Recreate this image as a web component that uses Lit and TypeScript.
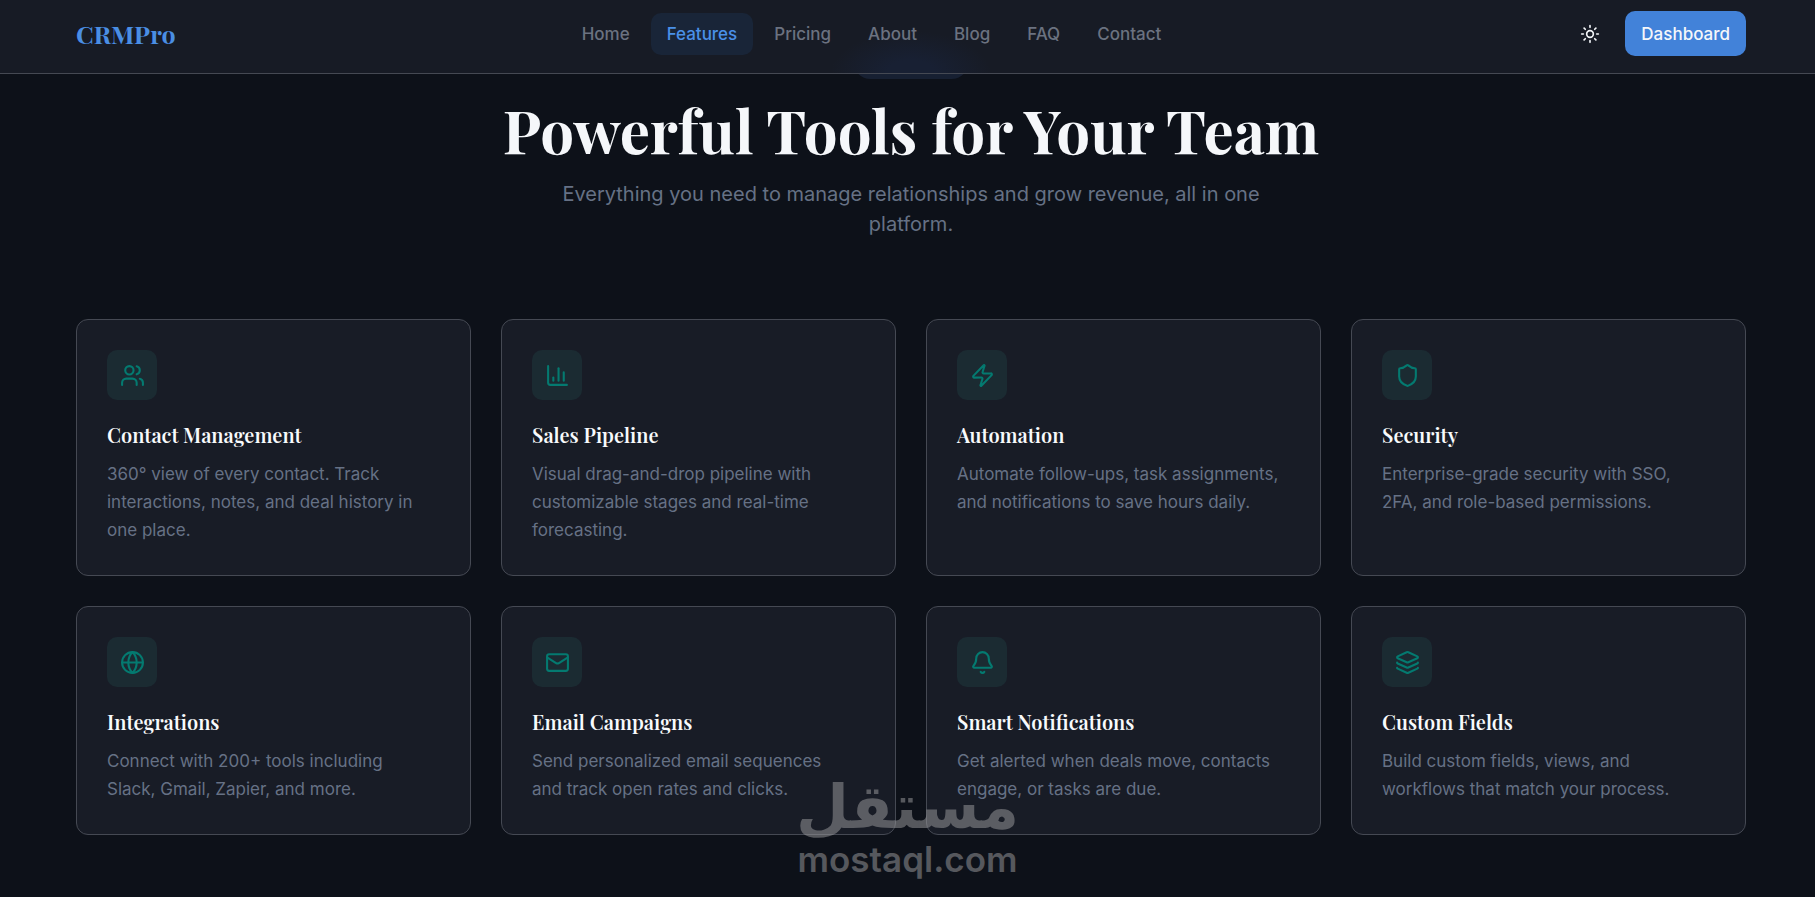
import { LitElement, html, css, svg } from "lit";
import { customElement, property } from "lit/decorators.js";
import { classMap } from "lit/directives/class-map.js";

const icons: Record<string, unknown> = {
  users: svg`<path d="M16 21v-2a4 4 0 0 0-4-4H6a4 4 0 0 0-4 4v2"/><circle cx="9" cy="7" r="4"/><path d="M16 3.128a4 4 0 0 1 0 7.744"/><path d="M22 21v-2a4 4 0 0 0-3-3.87"/>`,
  chart: svg`<path d="M3 3v16a2 2 0 0 0 2 2h16"/><path d="M18 17V9"/><path d="M13 17V5"/><path d="M8 17v-3"/>`,
  zap: svg`<path d="M4 14a1 1 0 0 1-.78-1.63l9.9-10.2a.5.5 0 0 1 .86.46l-1.92 6.02A1 1 0 0 0 13 10h7a1 1 0 0 1 .78 1.63l-9.9 10.2a.5.5 0 0 1-.86-.46l1.92-6.02A1 1 0 0 0 11 14z"/>`,
  shield: svg`<path d="M20 13c0 5-3.5 7.5-7.66 8.95a1 1 0 0 1-.67-.01C7.5 20.5 4 18 4 13V6a1 1 0 0 1 1-1c2 0 4.5-1.2 6.24-2.72a1.17 1.17 0 0 1 1.52 0C14.51 3.81 17 5 19 5a1 1 0 0 1 1 1z"/>`,
  globe: svg`<circle cx="12" cy="12" r="10"/><path d="M12 2a14.5 14.5 0 0 0 0 20 14.5 14.5 0 0 0 0-20"/><path d="M2 12h20"/>`,
  mail: svg`<path d="m22 7-8.991 5.727a2 2 0 0 1-2.009 0L2 7"/><rect x="2" y="4" width="20" height="16" rx="2"/>`,
  bell: svg`<path d="M10.268 21a2 2 0 0 0 3.464 0"/><path d="M3.262 15.326A1 1 0 0 0 4 17h16a1 1 0 0 0 .74-1.673C19.41 13.956 18 12.499 18 8A6 6 0 0 0 6 8c0 4.499-1.411 5.956-2.738 7.326"/>`,
  layers: svg`<path d="M12.83 2.18a2 2 0 0 0-1.66 0L2.6 6.08a1 1 0 0 0 0 1.83l8.58 3.91a2 2 0 0 0 1.66 0l8.58-3.9a1 1 0 0 0 0-1.83z"/><path d="M2 12a1 1 0 0 0 .58.91l8.6 3.91a2 2 0 0 0 1.65 0l8.58-3.9A1 1 0 0 0 22 12"/><path d="M2 17a1 1 0 0 0 .58.91l8.6 3.91a2 2 0 0 0 1.65 0l8.58-3.9A1 1 0 0 0 22 17"/>`,
  sun: svg`<circle cx="12" cy="12" r="4"/><path d="M12 2v2"/><path d="M12 20v2"/><path d="m4.93 4.93 1.41 1.41"/><path d="m17.66 17.66 1.41 1.41"/><path d="M2 12h2"/><path d="M20 12h2"/><path d="m6.34 17.66-1.41 1.41"/><path d="m19.07 4.93-1.41 1.41"/>`,
};

const icon = (name: string) => html`<svg
  class="icon"
  viewBox="0 0 24 24"
  fill="none"
  stroke="currentColor"
  stroke-width="2"
  stroke-linecap="round"
  stroke-linejoin="round"
  aria-hidden="true"
>${icons[name]}</svg>`;

const links = ["Home", "Features", "Pricing", "About", "Blog", "FAQ", "Contact"];

const features = [
  { icon: "users", title: "Contact Management", text: "360° view of every contact. Track interactions, notes, and deal history in one place." },
  { icon: "chart", title: "Sales Pipeline", text: "Visual drag-and-drop pipeline with customizable stages and real-time forecasting." },
  { icon: "zap", title: "Automation", text: "Automate follow-ups, task assignments, and notifications to save hours daily." },
  { icon: "shield", title: "Security", text: "Enterprise-grade security with SSO, 2FA, and role-based permissions." },
  { icon: "globe", title: "Integrations", text: "Connect with 200+ tools including Slack, Gmail, Zapier, and more." },
  { icon: "mail", title: "Email Campaigns", text: "Send personalized email sequences and track open rates and clicks." },
  { icon: "bell", title: "Smart Notifications", text: "Get alerted when deals move, contacts engage, or tasks are due." },
  { icon: "layers", title: "Custom Fields", text: "Build custom fields, views, and workflows that match your process." },
];

@customElement("feature-card")
class FeatureCard extends LitElement {
  @property() icon = "";
  @property() heading = "";
  @property() text = "";

  static styles = css`
    :host {
      display: block;
      box-sizing: border-box;
      padding: 30px 40px 31px 30px;
      border: 1px solid #454953;
      border-radius: 12px;
      background: #181c26;
    }
    .tile {
      display: grid;
      place-items: center;
      width: 50px;
      height: 50px;
      margin-bottom: 20px;
      border-radius: 10px;
      background: #1b2b32;
      color: #047a70;
    }
    .icon {
      width: 25px;
      height: 25px;
    }
    .title {
      margin: 0 0 10px;
      font: 600 20px/30px "Playfair Display", "Liberation Serif", serif;
      color: #f8fafc;
    }
    .text {
      margin: 0;
      font-size: 17px;
      line-height: 28px;
      color: #667185;
    }
  `;

  render() {
    return html`
      <div class="tile">${icon(this.icon)}</div>
      <h3 class="title">${this.heading}</h3>
      <p class="text">${this.text}</p>
    `;
  }
}

@customElement("app-root")
class AppRoot extends LitElement {
  static styles = css`
    :host {
      display: block;
      position: relative;
      min-height: 100vh;
      background: #0d1119;
      font-family: Inter, "Liberation Sans", sans-serif;
      color: #f5f7fa;
    }
    .header {
      position: sticky;
      top: 0;
      z-index: 2;
      padding: 0 69px 0 76px;
      border-bottom: 1px solid #454953;
      background: #171b25;
    }
    .bar {
      display: flex;
      align-items: center;
      justify-content: space-between;
      padding: 11px 0 17px;
      background: radial-gradient(ellipse 80px 42px at 50% 100%, #182033 30%, transparent);
    }
    .logo {
      font: 700 25px/32px "Playfair Display", "Liberation Serif", serif;
      color: #4a8ee4;
      text-decoration: none;
    }
    .nav {
      display: flex;
      gap: 5px;
    }
    .link {
      padding: 8px 16px;
      border-radius: 10px;
      font-size: 17px;
      line-height: 26px;
      font-weight: 500;
      color: #6b7280;
      text-decoration: none;
    }
    .link.active {
      background: #192538;
      color: #4a90e8;
    }
    .actions {
      display: flex;
      align-items: center;
      gap: 13px;
    }
    .theme {
      display: grid;
      place-items: center;
      width: 45px;
      height: 45px;
      padding: 0;
      border: 0;
      background: none;
      color: #f5f7fa;
    }
    .theme .icon {
      width: 20px;
      height: 20px;
    }
    .cta {
      height: 45px;
      padding: 0 16px;
      border: 0;
      border-radius: 10px;
      background: #4282d9;
      color: #f5f7fa;
      font: 500 17px/26px Inter, "Liberation Sans", sans-serif;
    }
    .main {
      padding: 0 69px 60px 76px;
    }
    .hero {
      display: flex;
      flex-direction: column;
      align-items: center;
      margin-bottom: 80px;
      text-align: center;
    }
    .badge {
      width: 116px;
      height: 35px;
      margin-top: -30px;
      border-radius: 18px;
      background: #172032;
    }
    .headline {
      margin: 13px 0 12px;
      font: 700 60px/75px "Playfair Display", "Liberation Serif", serif;
    }
    .lead {
      max-width: 720px;
      margin: 0;
      font-size: 20px;
      line-height: 30px;
      color: #667185;
    }
    .grid {
      display: grid;
      grid-template-columns: repeat(4, 1fr);
      gap: 30px;
    }
    .watermark {
      position: absolute;
      right: 0;
      bottom: 16px;
      left: 0;
      z-index: 3;
      display: flex;
      flex-direction: column;
      align-items: center;
      color: #9e9ea0;
      opacity: 0.5;
      pointer-events: none;
    }
    .mark-ar {
      font: 700 61px/60px "DejaVu Sans", sans-serif;
    }
    .mark-en {
      font-size: 35px;
      line-height: 44px;
      font-weight: 600;
    }
    @media (max-width: 1280px) {
      .grid {
        grid-template-columns: repeat(2, 1fr);
      }
    }
  `;

  render() {
    return html`
      <header class="header">
        <div class="bar">
          <a class="logo" href="#">CRMPro</a>
          <nav class="nav" aria-label="Main">
            ${links.map(
              (name) => html`<a class=${classMap({ link: true, active: name === "Features" })} href="#">${name}</a>`
            )}
          </nav>
          <div class="actions">
            <button class="theme" type="button" aria-label="Toggle theme">${icon("sun")}</button>
            <button class="cta" type="button">Dashboard</button>
          </div>
        </div>
      </header>
      <main class="main">
        <section class="hero">
          <span class="badge"></span>
          <h1 class="headline">Powerful Tools for Your Team</h1>
          <p class="lead">Everything you need to manage relationships and grow revenue, all in one platform.</p>
        </section>
        <section class="grid">
          ${features.map(
            (f) => html`<feature-card .icon=${f.icon} .heading=${f.title} .text=${f.text}></feature-card>`
          )}
        </section>
      </main>
      <div class="watermark">
        <span class="mark-ar" lang="ar" dir="rtl">مستقل</span>
        <span class="mark-en">mostaql.com</span>
      </div>
    `;
  }
}
